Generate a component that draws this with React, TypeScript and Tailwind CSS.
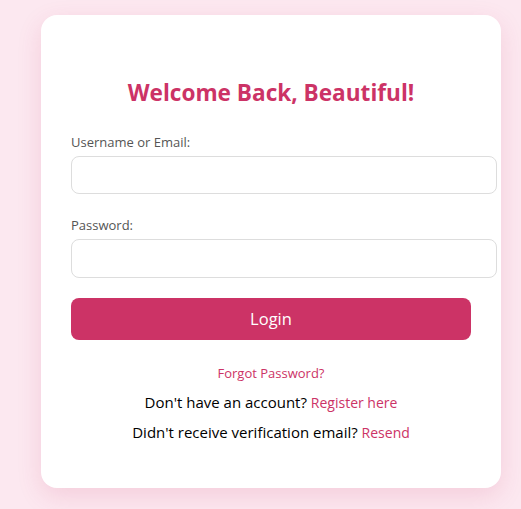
export default function App() {
  return (
    <div className="min-h-[509px] w-full bg-[#fce8f0] pt-[15px] pb-[21px] font-['Segoe_UI','Open_Sans',sans-serif]">
      <div className="ml-[41px] w-[460px] rounded-[16px] bg-white px-[30px] pt-[63px] pb-[44px] shadow-[0_8px_24px_rgba(204,51,102,0.15)]">
        <h2 className="h-[30px] text-center text-[22.6px] font-bold leading-[30px] text-[#cc3366]">
          Welcome Back, Beautiful!
        </h2>

        <form className="mt-[25px]" onSubmit={(e) => e.preventDefault()}>
          <div>
            <label className="block h-[18px] text-[13px] leading-[18px] text-[#555]">Username or Email:</label>
            <input
              type="text"
              className="mt-[5px] box-content block h-[36px] w-full rounded-[8px] border border-[#ddd] px-[12px] outline-none"
            />
          </div>
          <div className="mt-[22px]">
            <label className="block h-[18px] text-[13px] leading-[18px] text-[#555]">Password:</label>
            <input
              type="password"
              className="mt-[5px] box-content block h-[37px] w-full rounded-[8px] border border-[#ddd] px-[12px] outline-none"
            />
          </div>
          <button
            type="submit"
            className="mt-[20px] block h-[42px] w-full rounded-[8px] bg-[#cc3366] text-[16.5px] text-white"
          >
            Login
          </button>
        </form>

        <div className="mt-[24px] text-center">
          <a href="#" className="block text-[13px] leading-[18px] text-[#cc3366]">Forgot Password?</a>
          <p className="mt-[9px] text-[15px] leading-[22px] text-black">
            Don't have an account? <a href="#" className="text-[14px] text-[#cc3366]">Register here</a>
          </p>
          <p className="mt-[7px] text-[15px] leading-[22px] text-black">
            Didn't receive verification email? <a href="#" className="text-[14px] text-[#cc3366]">Resend</a>
          </p>
        </div>
      </div>
    </div>
  );
}
